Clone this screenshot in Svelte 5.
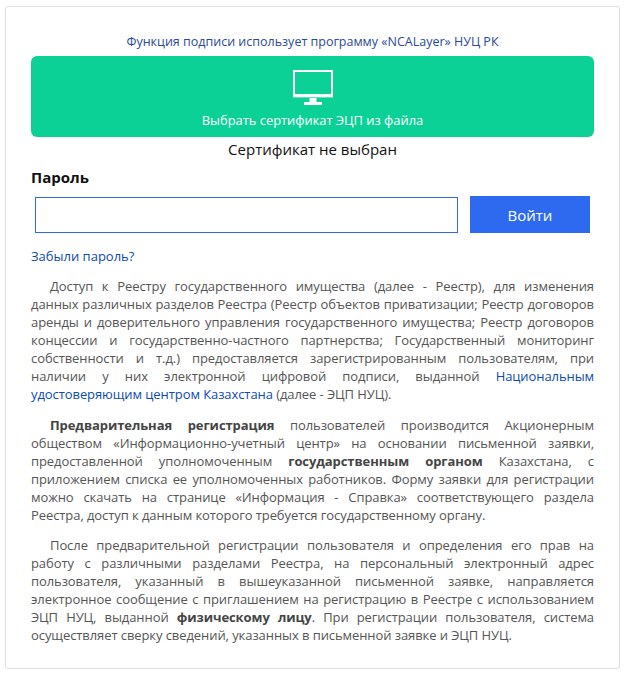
<script>
  let password = "";
</script>

<div class="card">
  <p class="notice">Функция подписи использует программу «NCALayer» НУЦ РК</p>

  <button class="cert-btn">
    <svg width="40" height="36" viewBox="0 0 40 36" fill="none">
      <rect x="1" y="1" width="38" height="25" fill="none" stroke="#fff" stroke-width="2" />
      <rect x="0" y="24" width="40" height="3" fill="#fff" />
      <rect x="0" y="27" width="40" height="1" fill="#fff" opacity="0.35" />
      <rect x="16.5" y="28" width="7" height="4" fill="#fff" />
      <rect x="11" y="32" width="18" height="3" fill="#fff" />
    </svg>
    <span>Выбрать сертификат ЭЦП из файла</span>
  </button>
  <p class="cert-status">Сертификат не выбран</p>

  <label class="pass-label" for="pass">Пароль</label>
  <div class="login-row">
    <input id="pass" type="password" bind:value={password} />
    <button class="login-btn">Войти</button>
  </div>

  <a class="forgot" href="#top">Забыли пароль?</a>

  <div class="info">
    <p>
      Доступ к Реестру государственного имущества (далее - Реестр), для изменения данных различных разделов Реестра (Реестр объектов приватизации; Реестр договоров аренды и доверительного управления государственного имущества; Реестр договоров концессии и государственно-частного партнерства; Государственный мониторинг собственности и т.д.) предоставляется зарегистрированным пользователям, при наличии у них электронной цифровой подписи, выданной <a href="#top">Национальным удостоверяющим центром Казахстана</a> (далее - ЭЦП НУЦ).
    </p>
    <p>
      <b>Предварительная регистрация</b> пользователей производится Акционерным обществом «Информационно-учетный центр» на основании письменной заявки, предоставленной уполномоченным <b>государственным органом</b> Казахстана, с приложением списка ее уполномоченных работников. Форму заявки для регистрации можно скачать на странице «Информация - Справка» соответствующего раздела Реестра, доступ к данным которого требуется государственному органу.
    </p>
    <p>
      После предварительной регистрации пользователя и определения его прав на работу с различными разделами Реестра, на персональный электронный адрес пользователя, указанный в вышеуказанной письменной заявке, направляется электронное сообщение с приглашением на регистрацию в Реестре с использованием ЭЦП НУЦ, выданной <b>физическому лицу</b>. При регистрации пользователя, система осуществляет сверку сведений, указанных в письменной заявке и ЭЦП НУЦ.
    </p>
  </div>
</div>

<style>
  :global(body) {
    background: #fff;
    font-family: "Open Sans", "Noto Sans", sans-serif;
  }

  .card {
    box-sizing: border-box;
    width: 615px;
    height: 663px;
    margin: 6px 0 0 5px;
    padding: 27px 25px 0 25px;
    border: 1px solid #dfdfdf;
    border-radius: 3px;
  }

  .notice {
    margin: 0 0 6px;
    font-size: 12.5px;
    line-height: 16px;
    text-align: center;
    color: #2a4a9a;
  }

  .cert-btn {
    display: flex;
    flex-direction: column;
    align-items: center;
    width: 563px;
    height: 81px;
    padding: 14px 0 0;
    border: none;
    border-radius: 6px;
    background: #0bd197;
    color: #fff;
    font: inherit;
    font-size: 12.9px;
  }

  .cert-btn span {
    margin-top: 5px;
    line-height: 18px;
  }

  .cert-status {
    margin: 1px 0 0;
    font-size: 15px;
    line-height: 22px;
    text-align: center;
    color: #111;
  }

  .pass-label {
    display: block;
    margin-top: 7px;
    font-size: 15px;
    font-weight: 700;
    line-height: 20px;
    color: #111;
  }

  .login-row {
    display: flex;
    gap: 12px;
    margin: 9px 4px 0;
  }

  .login-row input {
    box-sizing: border-box;
    width: 423px;
    height: 36px;
    margin-top: 1px;
    border: 1px solid #2d68e6;
    outline: none;
  }

  .login-btn {
    width: 120px;
    height: 37px;
    border: none;
    background: #2d6af0;
    color: #fff;
    font: inherit;
    font-size: 15px;
  }

  .forgot {
    display: block;
    margin-top: 14px;
    font-size: 13px;
    line-height: 18px;
    color: #0b4bb3;
    text-decoration: none;
  }

  .info {
    margin-top: 12px;
    font-size: 13px;
    letter-spacing: -0.08px;
    line-height: 18px;
    color: #555;
    text-align: justify;
  }

  .info p {
    margin: 0 0 12.5px;
    text-indent: 19px;
  }

  .info a {
    color: #0b4bb3;
    text-decoration: none;
  }

  .info b {
    color: #444;
  }
</style>
